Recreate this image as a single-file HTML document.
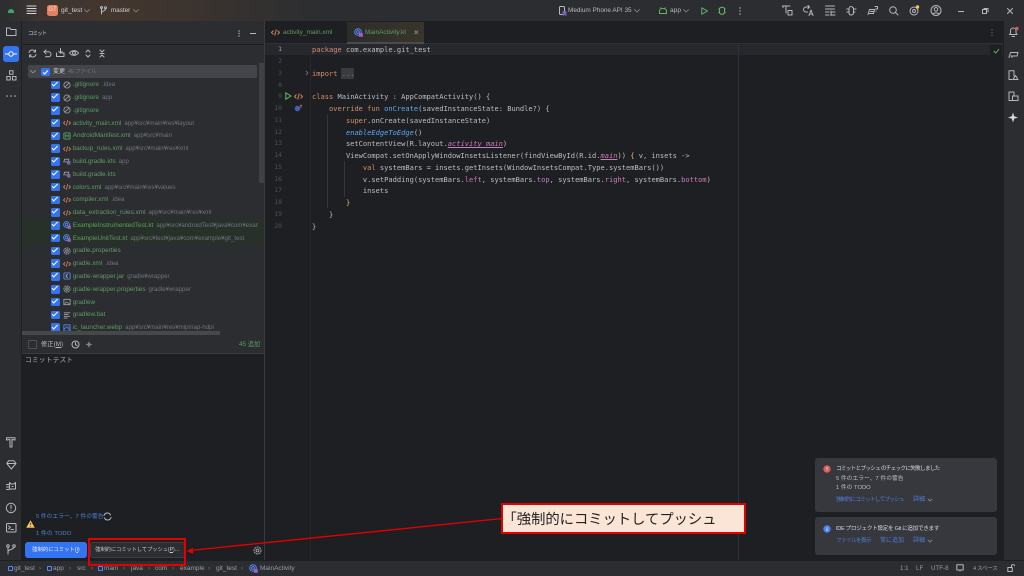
<!DOCTYPE html>
<html lang="ja"><head><meta charset="utf-8"><title>git_test</title>
<style>
html,body{margin:0;padding:0;width:1024px;height:576px;overflow:hidden;background:#1e1f22}
body{position:relative;font-family:"Liberation Sans","Noto Sans CJK JP",sans-serif;color:#bcbec4}
#m{position:absolute;left:0;top:0;width:1024px;height:576px;overflow:hidden;filter:blur(.35px)}
.a{position:absolute}
.t{position:absolute;white-space:nowrap;line-height:10px;height:10px;font-size:6.6px}
.r{position:absolute;left:51px;height:13px;width:213px;white-space:nowrap}
.r .c{position:absolute;left:0;top:2px;width:8.5px;height:8.5px;background:#3574f0;border-radius:1.5px}
.r .c:after{content:"";position:absolute;left:1.4px;top:1.2px;width:4.6px;height:2.4px;border-left:1.2px solid #fff;border-bottom:1.2px solid #fff;transform:rotate(-45deg)}
.r svg{position:absolute;left:12px;top:2.3px;width:8px;height:8px}
.r b{position:absolute;left:21.7px;top:1.9px;font-weight:400;font-size:6.4px;line-height:10px;color:#5f9b63}
.r b i{font-style:normal;color:#6f737a;margin-left:3px;font-size:6.1px}
svg{display:block;overflow:visible}
.s{fill:none;stroke:#b4b8bf;stroke-width:1;stroke-linecap:round;stroke-linejoin:round}
.h{fill:none;stroke:#8a8d93;stroke-width:.8;stroke-linecap:round;stroke-linejoin:round}
.code{position:absolute;left:312px;font:7.06px/11.75px "DejaVu Sans Mono","Liberation Mono",monospace;color:#bcbec4;white-space:pre}
.k{color:#cf8e6d}.f{color:#56a8f5}.p{color:#c77dbb}.st{color:#56a8f5;font-style:italic}
.u{text-decoration:underline;color:#c77dbb}
.n{position:absolute;left:260px;width:22px;text-align:right;font:6.4px/11.75px "DejaVu Sans Mono","Liberation Mono",monospace;color:#4b5059}
</style></head><body>
<div id="m">

<!-- title bar -->
<div class="a" style="left:0;top:0;width:1024px;height:21px;background:linear-gradient(90deg,#2b2d30 0,#3e3530 40px,#43372e 110px,#3a332f 200px,#2b2d30 330px)"></div>
<div class="a" style="left:8px;top:9px;width:6px;height:3.5px;background:#3ddc84;border-radius:3px 3px 0 0;opacity:.7"></div>
<svg class="a" style="left:27px;top:5px" width="10" height="10"><path class="s" d="M0 1H9M0 3.500H9M0 6H9M0 8.500H9" style="stroke:#d5d7da"/></svg>
<div class="a" style="left:47px;top:5px;width:11px;height:11px;background:#e0805f;border-radius:2.5px;color:#fbe3d8;font-size:6px;line-height:11px;text-align:center">GT</div>
<div class="t" style="left:61px;top:6px;color:#cfd1d4">git_test</div>
<svg class="a" style="left:84px;top:9px" width="6" height="4"><path class="h" d="M.5 .5L3 3L5.500 .5"/></svg>
<svg class="a" style="left:100px;top:6px" width="7" height="9"><path class="s" d="M1.500 2V8M5.500 3C5.500 5 1.500 5 1.500 6.500"/><circle class="s" cx="1.500" cy="1.500" r="1"/><circle class="s" cx="5.500" cy="1.800" r="1"/></svg>
<div class="t" style="left:111px;top:6px;color:#cfd1d4;font-size:6.300px">master</div>
<svg class="a" style="left:133px;top:9px" width="6" height="4"><path class="h" d="M.5 .5L3 3L5.500 .5"/></svg>

<svg class="a" style="left:559px;top:6px" width="8" height="10"><rect class="s" x=".5" y=".5" width="5" height="8" rx="1"/><rect x="3.500" y="5" width="4" height="4.500" fill="#7a5fb0"/></svg>
<div class="t" style="left:568px;top:6px;color:#b5b8bd;font-size:6.400px">Medium Phone API 35</div>
<svg class="a" style="left:634px;top:9px" width="6" height="4"><path class="h" d="M.5 .5L3 3L5.500 .5"/></svg>
<svg class="a" style="left:659px;top:7px" width="8" height="7"><path d="M.5 6.500V4C.5 2.500 2 1.500 4 1.500S7.500 2.500 7.500 4V6.500Z" fill="none" stroke="#5fb865"/><path d="M1.500 .3L2.500 1.800M6.500 .3L5.500 1.800" stroke="#5fb865" stroke-width=".8"/></svg>
<div class="t" style="left:670px;top:6px;color:#b5b8bd">app</div>
<svg class="a" style="left:683px;top:9px" width="6" height="4"><path class="h" d="M.5 .5L3 3L5.500 .5"/></svg>
<svg class="a" style="left:701px;top:7px" width="7" height="8"><path d="M.8 .8L6.500 4L.8 7.200Z" fill="none" stroke="#5fb865" stroke-linejoin="round"/></svg>
<svg class="a" style="left:718px;top:6px" width="8" height="9"><path d="M1.500 3.500C1.500 2 2.500 1.300 4 1.300S6.500 2 6.500 3.500V6C6.500 7.500 5.500 8.300 4 8.300S1.500 7.500 1.500 6Z" fill="none" stroke="#5fb865"/><path d="M0 3H1.500M0 6.500H1.500M6.500 3H8M6.500 6.500H8" stroke="#5fb865" stroke-width=".8"/></svg>
<svg class="a" style="left:739px;top:7px" width="2" height="8"><circle cx="1" cy="1" r=".7" fill="#b4b8bf"/><circle cx="1" cy="4" r=".7" fill="#b4b8bf"/><circle cx="1" cy="7" r=".7" fill="#b4b8bf"/></svg>

<svg class="a" style="left:782px;top:5px" width="11" height="11"><path class="s" d="M.5 1H8M4 1V8M1 1V2.500M6 5.500H10V10H6Z"/></svg>
<svg class="a" style="left:803px;top:5px" width="11" height="11"><path class="s" d="M6 2H3A2.500 2.500 0 0 0 3 7H4.500M5 .5L6.500 2L5 3.500M6 10.500L8 5L10 10.500M6.800 9H9.200"/></svg>
<svg class="a" style="left:825px;top:5px" width="11" height="11"><path class="s" d="M.5 1H9.500M.5 4H9.500M.5 7H4M.5 10H4M6 7H10M6 10H10M6 6V10.500"/></svg>
<svg class="a" style="left:846px;top:5px" width="11" height="11"><path class="s" d="M3 4C3 2.500 4 1.500 5 1.500S7.500 2.500 7.500 4V7.500C7.500 9 6.500 10 5 10S3 9 3 7.500ZM.8 4H3M.8 7H3M7.500 4H10M7.500 7H9"/></svg>
<svg class="a" style="left:867px;top:5px" width="11" height="11"><path class="s" d="M1 9.500L2.500 4.500H7.500L6.500 8.500H2.500M3.500 6.500H6M8 1.500H10.500V4H8.500M9 6V6.300"/></svg>
<svg class="a" style="left:889px;top:6px" width="10" height="10"><circle class="s" cx="4" cy="4" r="3.300"/><path class="s" d="M6.500 6.500L9 9"/></svg>
<svg class="a" style="left:909px;top:5px" width="12" height="11"><circle class="s" cx="5" cy="6" r="1.500"/><circle class="s" cx="5" cy="6" r="4"/><circle cx="8.500" cy="2" r="1.700" fill="#f2c55c"/></svg>
<svg class="a" style="left:930px;top:5px" width="12" height="12"><circle class="s" cx="6" cy="5.500" r="5"/><circle class="s" cx="6" cy="4.300" r="1.800"/><path class="s" d="M3 9C3.500 7.500 8.500 7.500 9 9"/></svg>
<div class="a" style="left:958px;top:10.500px;width:6px;height:1px;background:#b4b8bf"></div>
<svg class="a" style="left:982px;top:8px" width="7" height="6"><rect class="s" x=".5" y="1.500" width="4" height="4"/><path class="s" d="M2 .5H6V4"/></svg>
<svg class="a" style="left:1007px;top:8px" width="6" height="6"><path class="s" d="M.5 .5L5.500 5.500M5.500 .5L.5 5.500"/></svg>

<!-- left stripe -->
<div class="a" style="left:0;top:21px;width:22px;height:539px;background:#2b2d30;border-right:1px solid #1e1f22;box-sizing:border-box"></div>
<svg class="a" style="left:6px;top:27px" width="11" height="10"><path class="s" d="M.5 8.500V1H4L5 2.500H10V8.500Z"/></svg>
<div class="a" style="left:3px;top:46px;width:16px;height:16px;background:#3574f0;border-radius:3px"></div>
<svg class="a" style="left:5px;top:50px" width="12" height="8"><path d="M0 4H3.500M8.500 4H12" stroke="#fff" stroke-width="1"/><circle cx="6" cy="4" r="2.200" fill="none" stroke="#fff"/></svg>
<svg class="a" style="left:6px;top:70px" width="11" height="11"><rect class="s" x="3.500" y=".8" width="3.500" height="3.500"/><rect class="s" x=".8" y="6.500" width="3.500" height="3.500"/><rect class="s" x="6.500" y="6.500" width="3.500" height="3.500"/></svg>
<svg class="a" style="left:6px;top:95px" width="10" height="2"><circle cx="1" cy="1" r=".8" fill="#b4b8bf"/><circle cx="5" cy="1" r=".8" fill="#b4b8bf"/><circle cx="9" cy="1" r=".8" fill="#b4b8bf"/></svg>
<svg class="a" style="left:6px;top:437px" width="10" height="11"><path class="s" d="M.5 .8H9V3L6 2.500V10H4V2.500L.5 3Z"/></svg>
<svg class="a" style="left:6px;top:460px" width="11" height="10"><path class="s" d="M2.500 .8H8L10 3.500L5.300 9L.8 3.500ZM.8 3.500H10"/></svg>
<svg class="a" style="left:6px;top:481px" width="11" height="11"><path class="s" d="M3.500 1.500L5 3H8L9.500 1.500V8H3.500ZM.5 3.500H3M.5 6H3M.5 8.500H3M7 5.500H6"/></svg>
<svg class="a" style="left:5px;top:502px" width="12" height="12"><circle class="s" cx="6" cy="6" r="4.700"/><path class="s" d="M6 3.300V6.500M6 8.500V8.700"/></svg>
<svg class="a" style="left:6px;top:523px" width="11" height="10"><rect class="s" x=".5" y=".5" width="9.500" height="8.500" rx="1"/><path class="s" d="M2.500 3L4.500 4.500L2.500 6M5 6.500H7.500"/></svg>
<svg class="a" style="left:6px;top:544px" width="11" height="11"><circle class="s" cx="2" cy="2" r="1.300"/><circle class="s" cx="8" cy="2" r="1.300"/><path class="s" d="M2 3.300V10M8 3.300C8 5.500 2 5.500 2 7.500"/></svg>

<!-- commit panel -->
<div class="a" style="left:22px;top:21px;width:242px;height:332px;background:#2b2d30"></div>
<div class="a" style="left:264px;top:21px;width:1px;height:539px;background:#393b40"></div>
<div class="a" style="left:22px;top:44px;width:242px;height:1px;background:#1e1f22"></div>
<div class="t" style="left:28px;top:28.500px;font-size:5.400px;letter-spacing:-.8px;color:#c9cbcf">コミット</div>
<svg class="a" style="left:238px;top:30px" width="2" height="7"><circle cx="1" cy="1" r=".7" fill="#b4b8bf"/><circle cx="1" cy="3.500" r=".7" fill="#b4b8bf"/><circle cx="1" cy="6" r=".7" fill="#b4b8bf"/></svg>
<div class="a" style="left:250px;top:33px;width:6px;height:1px;background:#b4b8bf"></div>

<svg class="a" style="left:28px;top:49px" width="9" height="9"><path class="s" d="M1 3.500A3.500 3.500 0 0 1 7.500 3M8 5.500A3.500 3.500 0 0 1 1.500 6M7.500 1V3H5.800M1.500 8V6H3.200"/></svg>
<svg class="a" style="left:43px;top:49px" width="9" height="9"><path class="s" d="M3 .8L1 2.800L3 4.800M1 2.800H5.500A2.500 2.500 0 0 1 5.500 7.800H2.500"/></svg>
<svg class="a" style="left:56px;top:48px" width="9" height="10"><path class="s" d="M4.500 .5V5M2.800 3.500L4.500 5.200L6.200 3.500M.5 5V8.500H8V5H6"/></svg>
<svg class="a" style="left:69px;top:49px" width="11" height="9"><path class="s" d="M.5 4C3 .8 7 .8 9.500 4C7 7.200 3 7.200 .5 4Z"/><circle class="s" cx="5" cy="4" r="1.500"/></svg>
<svg class="a" style="left:85px;top:49px" width="6" height="9"><path class="s" d="M1 3L3 1L5 3M1 6L3 8L5 6"/></svg>
<svg class="a" style="left:99px;top:49px" width="6" height="9"><path class="s" d="M1 1L3 3L5 1M1 8L3 6L5 8M1 4.500H5"/></svg>

<!-- changes row -->
<div class="a" style="left:28px;top:65px;width:229px;height:12.700px;background:#43454a;border-radius:2px"></div>
<svg class="a" style="left:30px;top:70px" width="6" height="4"><path class="s" d="M.5 .5L3 3L5.500 .5" style="stroke:#868a91"/></svg>
<div class="a" style="left:41px;top:67.500px;width:8.500px;height:8.500px;background:#3574f0;border-radius:1.500px"></div>
<svg class="a" style="left:41px;top:67.500px" width="9" height="9"><path d="M2 4.400L3.700 6L6.800 2.500" fill="none" stroke="#fff" stroke-width="1.200"/></svg>
<div class="t" style="left:53px;top:67px;font-size:6px;color:#c9cbcf">変更</div>
<div class="t" style="left:68px;top:67px;font-size:5.800px;letter-spacing:-.4px;color:#6f737a">45 ファイル</div>

<!-- green rows -->
<div class="a" style="left:22px;top:219px;width:242px;height:25.500px;background:#283129"></div>

<svg width="0" height="0" style="position:absolute">
<symbol id="ig" viewBox="0 0 9 9"><circle cx="4.500" cy="4.500" r="3.500" fill="none" stroke="#9a9da3"/><path d="M2 7L7 2" stroke="#9a9da3"/></symbol>
<symbol id="xml" viewBox="0 0 9 9"><path d="M2.500 2.500L.5 4.500L2.500 6.500M6.500 2.500L8.500 4.500L6.500 6.500" fill="none" stroke="#c9825f"/><path d="M5.200 1.500L3.800 7.500" stroke="#c9825f"/></symbol>
<symbol id="man" viewBox="0 0 9 9"><rect x="1" y="1" width="7" height="7" rx="1" fill="none" stroke="#57a860"/><path d="M2.800 6.200V3L4.500 5L6.200 3V6.200" fill="none" stroke="#57a860" stroke-width=".8"/></symbol>
<symbol id="gr" viewBox="0 0 9 9"><path d="M.8 6L1.800 2.500H6.500L6 5.500H2" fill="none" stroke="#a0a4aa"/><rect x="4.500" y="4.500" width="4" height="4" fill="#7a5fb0"/></symbol>
<symbol id="kt" viewBox="0 0 9 9"><circle cx="4" cy="4" r="3.300" fill="none" stroke="#548af7"/><circle cx="4" cy="4" r="1.400" fill="none" stroke="#548af7"/><rect x="5" y="5" width="3.800" height="3.800" fill="#9b5fc7"/></symbol>
<symbol id="gear" viewBox="0 0 9 9"><circle cx="4.500" cy="4.500" r="3.500" fill="none" stroke="#a0a4aa" stroke-dasharray="2 .6"/><circle cx="4.500" cy="4.500" r="1.400" fill="none" stroke="#a0a4aa"/></symbol>
<symbol id="jar" viewBox="0 0 9 9"><rect x="1" y="1" width="7" height="7" rx="1" fill="none" stroke="#548af7"/><path d="M3.500 2.500V6.500M5.500 2.500L3.700 4.500L5.500 6.500" fill="none" stroke="#a0a4aa" stroke-width=".8"/></symbol>
<symbol id="img" viewBox="0 0 9 9"><rect x="1" y="1.500" width="7" height="6" fill="none" stroke="#a0a4aa"/><path d="M2 6.500L4 4.500L7 6.500" fill="none" stroke="#a0a4aa" stroke-width=".8"/></symbol>
<symbol id="txt" viewBox="0 0 9 9"><path d="M1 2H8M1 4H6M1 6H8M1 8H5" stroke="#a0a4aa"/></symbol>
<symbol id="webp" viewBox="0 0 9 9"><rect x="1" y="1" width="7" height="7" fill="none" stroke="#548af7"/><path d="M1 6L4 3.500L8 7M5 2.500L7 4" fill="none" stroke="#548af7" stroke-width=".8"/></symbol>
</svg>

<div class="a" style="left:22px;top:78px;width:236px;height:253px;overflow:hidden">
<div class="a" style="left:-22px;top:-78px;width:280px;height:420px">
<div class="r" style="top:78.500px"><span class="c"></span><svg><use href="#ig"/></svg><b>.gitignore<i>.idea</i></b></div>
<div class="r" style="top:91.300px"><span class="c"></span><svg><use href="#ig"/></svg><b>.gitignore<i>app</i></b></div>
<div class="r" style="top:104px"><span class="c"></span><svg><use href="#ig"/></svg><b>.gitignore</b></div>
<div class="r" style="top:116.800px"><span class="c"></span><svg><use href="#xml"/></svg><b>activity_main.xml<i>app¥src¥main¥res¥layout</i></b></div>
<div class="r" style="top:129.600px"><span class="c"></span><svg><use href="#man"/></svg><b>AndroidManifest.xml<i>app¥src¥main</i></b></div>
<div class="r" style="top:142.400px"><span class="c"></span><svg><use href="#xml"/></svg><b>backup_rules.xml<i>app¥src¥main¥res¥xml</i></b></div>
<div class="r" style="top:155.200px"><span class="c"></span><svg><use href="#gr"/></svg><b>build.gradle.kts<i>app</i></b></div>
<div class="r" style="top:168px"><span class="c"></span><svg><use href="#gr"/></svg><b>build.gradle.kts</b></div>
<div class="r" style="top:180.800px"><span class="c"></span><svg><use href="#xml"/></svg><b>colors.xml<i>app¥src¥main¥res¥values</i></b></div>
<div class="r" style="top:193.600px"><span class="c"></span><svg><use href="#xml"/></svg><b>compiler.xml<i>.idea</i></b></div>
<div class="r" style="top:206.300px"><span class="c"></span><svg><use href="#xml"/></svg><b>data_extraction_rules.xml<i>app¥src¥main¥res¥xml</i></b></div>
<div class="r" style="top:219px"><span class="c"></span><svg><use href="#kt"/></svg><b>ExampleInstrumentedTest.kt<i>app¥src¥androidTest¥java¥com¥example</i></b></div>
<div class="r" style="top:231.800px"><span class="c"></span><svg><use href="#kt"/></svg><b>ExampleUnitTest.kt<i>app¥src¥test¥java¥com¥example¥git_test</i></b></div>
<div class="r" style="top:244.600px"><span class="c"></span><svg><use href="#gear"/></svg><b>gradle.properties</b></div>
<div class="r" style="top:257.400px"><span class="c"></span><svg><use href="#xml"/></svg><b>gradle.xml<i>.idea</i></b></div>
<div class="r" style="top:270.200px"><span class="c"></span><svg><use href="#jar"/></svg><b>gradle-wrapper.jar<i>gradle¥wrapper</i></b></div>
<div class="r" style="top:283px"><span class="c"></span><svg><use href="#gear"/></svg><b>gradle-wrapper.properties<i>gradle¥wrapper</i></b></div>
<div class="r" style="top:295.800px"><span class="c"></span><svg><use href="#img"/></svg><b>gradlew</b></div>
<div class="r" style="top:308.600px"><span class="c"></span><svg><use href="#txt"/></svg><b>gradlew.bat</b></div>
<div class="r" style="top:321.400px"><span class="c"></span><svg><use href="#webp"/></svg><b>ic_launcher.webp<i>app¥src¥main¥res¥mipmap-hdpi</i></b></div>
</div></div>
<!-- scrollbars -->
<div class="a" style="left:259px;top:63px;width:5px;height:120px;background:#3f4145"></div>
<div class="a" style="left:22px;top:331px;width:198px;height:4px;background:#46484c"></div>

<!-- amend -->
<div class="a" style="left:28px;top:340px;width:8.500px;height:8.500px;box-sizing:border-box;border:1px solid #4e5157;border-radius:1.500px"></div>
<div class="t" style="left:41px;top:340px;font-size:6.300px;color:#b5b8bd">修正(<u>M</u>)</div>
<svg class="a" style="left:71px;top:340px" width="9" height="9"><circle class="s" cx="4.500" cy="4.500" r="3.500"/><path class="s" d="M4.500 2.500V4.700L6 5.500"/></svg>
<svg class="a" style="left:85px;top:340px" width="8" height="9"><path d="M4 1L5 3.500L7.500 4.500L5 5.500L4 8L3 5.500L.5 4.500L3 3.500Z" fill="#7d8087"/></svg>
<div class="t" style="left:239px;top:340px;font-size:6.300px;color:#5f9b63">45 追加</div>
<div class="a" style="left:22px;top:353px;width:242px;height:1px;background:#393b40"></div>
<div class="t" style="left:25px;top:355.500px;font-size:6.800px;color:#a9abb0;letter-spacing:.1px">コミットテスト</div>

<!-- checks -->
<div class="t" style="left:36px;top:512px;font-size:5.800px;color:#4f7fd6">5 件のエラー、7 件の警告</div>
<svg class="a" style="left:103px;top:512px" width="9" height="9"><path class="s" d="M1 3.500A3.500 3.500 0 0 1 7.500 3M8 5.500A3.500 3.500 0 0 1 1.500 6"/></svg>
<svg class="a" style="left:25.500px;top:519.500px" width="9" height="8"><path d="M4.500 .3L8.800 7.700H.2Z" fill="#f2c55c"/><path d="M4.500 2.700V5M4.500 6V6.700" stroke="#3a2f10" stroke-width=".8"/></svg>
<div class="t" style="left:36px;top:529px;font-size:5.900px;color:#4f7fd6">1 件の TODO</div>
<div class="a" style="left:25px;top:542px;width:62px;height:16px;background:#3574f0;border-radius:3px;color:#e8eefc;font-size:5.300px;line-height:16px;text-align:center;white-space:nowrap">強制的にコミット(<u>I</u>)</div>
<div class="a" style="left:90px;top:542px;width:94.500px;height:16px;box-sizing:border-box;background:#2b2d30;border:1px solid #3c3f43;border-radius:3px;color:#c9cbcf;font-size:5.200px;line-height:14px;text-align:center;white-space:nowrap">強制的にコミットしてプッシュ(<u>P</u>)...</div>
<svg class="a" style="left:253px;top:546px" width="9" height="9"><use href="#gear"/></svg>

<!-- editor tabs -->
<div class="a" style="left:265px;top:43px;width:738px;height:1px;background:#2f3136"></div>
<div class="a" style="left:347px;top:22px;width:77px;height:20px;background:linear-gradient(90deg,#2c2c2b,#38352a)"></div>
<div class="a" style="left:347px;top:42px;width:77px;height:2px;background:#4a4b4c"></div>
<svg class="a" style="left:271px;top:28px" width="9" height="9"><use href="#xml"/></svg>
<div class="t" style="left:283px;top:28px;color:#5f9b63;font-size:6.500px">activity_main.xml</div>
<svg class="a" style="left:354px;top:28px" width="9" height="9"><use href="#kt"/></svg>
<div class="t" style="left:365px;top:28px;color:#5f9b63;font-size:6.500px">MainActivity.kt</div>
<svg class="a" style="left:414px;top:30px" width="5" height="5"><path d="M.5 .5L4 4M4 .5L.5 4" stroke="#7d8087"/></svg>
<svg class="a" style="left:991px;top:29px" width="2" height="7"><circle cx="1" cy="1" r=".6" fill="#6f737a"/><circle cx="1" cy="3.500" r=".6" fill="#6f737a"/><circle cx="1" cy="6" r=".6" fill="#6f737a"/></svg>

<!-- editor -->
<div class="a" style="left:265px;top:44px;width:738px;height:11px;background:#26282e"></div>
<div class="a" style="left:310px;top:44px;width:1px;height:516px;background:#26282c"></div>
<div class="a" style="left:738px;top:44px;width:1px;height:516px;background:#2f3136"></div>
<div class="a" style="left:990px;top:45px;width:12px;height:11px;background:#1e1f22"></div>
<svg class="a" style="left:993px;top:48px" width="7" height="6"><path d="M.8 3L2.800 5L6 1" fill="none" stroke="#5fb865"/></svg>

<svg class="a" style="left:305px;top:70px" width="4" height="6"><path d="M.8 .8L3 3L.8 5.200" fill="none" stroke="#6f737a" stroke-width=".8"/></svg>
<svg class="a" style="left:285px;top:92px" width="7" height="8"><path d="M.8 .8L6 4L.8 7.200Z" fill="none" stroke="#5fb865"/></svg>
<svg class="a" style="left:294px;top:92px" width="9" height="9"><use href="#xml"/></svg>
<svg class="a" style="left:294px;top:104px" width="9" height="8"><circle cx="3.500" cy="4.500" r="2.800" fill="#3f62b5"/><path d="M7 4V1M6 2L7 1L8 2" stroke="#e06060" stroke-width=".7" fill="none"/></svg>
<div class="a" style="left:327px;top:114px;width:1px;height:94px;background:#313438"></div>
<div class="a" style="left:344px;top:161px;width:1px;height:36px;background:#313438"></div>
<div class="a" style="left:341px;top:68px;width:13px;height:11px;background:#393b40"></div>

<div class="a" style="left:0;top:.8px;width:1024px;height:300px">
<div class="n" style="top:43.500px;color:#a1a3ab">1</div>
<div class="n" style="top:55.300px">2</div>
<div class="n" style="top:67px">3</div>
<div class="n" style="top:78.800px">8</div>
<div class="n" style="top:90.500px">9</div>
<div class="n" style="top:102.300px">10</div>
<div class="n" style="top:114px">11</div>
<div class="n" style="top:125.800px">12</div>
<div class="n" style="top:137.500px">13</div>
<div class="n" style="top:149.300px">14</div>
<div class="n" style="top:161px">15</div>
<div class="n" style="top:172.800px">16</div>
<div class="n" style="top:184.500px">17</div>
<div class="n" style="top:196.300px">18</div>
<div class="n" style="top:208px">19</div>
<div class="n" style="top:219.800px">20</div>
<div class="code" style="top:43.500px"><span class="k">package</span> com.example.git_test</div>
<div class="code" style="top:67px"><span class="k">import</span> <span style="color:#7d8087">...</span></div>
<div class="code" style="top:90.500px"><span class="k">class</span> MainActivity : AppCompatActivity() {</div>
<div class="code" style="top:102.300px">    <span class="k">override fun</span> <span class="f">onCreate</span>(savedInstanceState: Bundle?) {</div>
<div class="code" style="top:114px">        <span class="k">super</span>.onCreate(savedInstanceState)</div>
<div class="code" style="top:125.800px">        <span class="st">enableEdgeToEdge</span>()</div>
<div class="code" style="top:137.500px">        setContentView(R.layout.<span class="u" style="font-style:italic">activity_main</span>)</div>
<div class="code" style="top:149.300px">        ViewCompat.setOnApplyWindowInsetsListener(findViewById(R.id.<span class="u" style="font-style:italic">main</span>)) <b style="font-weight:400;color:#e0bb65">{</b> v, insets -&gt;</div>
<div class="code" style="top:161px">            <span class="k">val</span> systemBars = insets.getInsets(WindowInsetsCompat.Type.systemBars())</div>
<div class="code" style="top:172.800px">            v.setPadding(systemBars.<span class="p">left</span>, systemBars.<span class="p">top</span>, systemBars.<span class="p">right</span>, systemBars.<span class="p">bottom</span>)</div>
<div class="code" style="top:184.500px">            insets</div>
<div class="code" style="top:196.300px">        <b style="font-weight:400;color:#e0bb65">}</b></div>
<div class="code" style="top:208px">    }</div>
<div class="code" style="top:219.800px">}</div>
</div>

<!-- right stripe -->
<div class="a" style="left:1003px;top:21px;width:21px;height:539px;background:#2b2d30;border-left:1px solid #1e1f22;box-sizing:border-box"></div>
<svg class="a" style="left:1008px;top:26px" width="11" height="12"><path class="s" d="M1.500 8.500H9L8 7V4.500C8 3 6.800 2 5.200 2S2.500 3 2.500 4.500V7ZM4 10.500H6.500"/><circle cx="9" cy="2.500" r="1.700" fill="#e05555"/></svg>
<svg class="a" style="left:1008px;top:49px" width="11" height="10"><path class="s" d="M1 8.500L2.500 3.500H10L9 7H3M4 8.500V7"/></svg>
<svg class="a" style="left:1008px;top:70px" width="11" height="11"><path class="s" d="M1 .8H6V6M1 .8V9.500H4M5 9.500H10L7.500 5.500Z"/></svg>
<svg class="a" style="left:1008px;top:91px" width="11" height="11"><path class="s" d="M1 1H6V4M1 1V9.500H4"/><rect x="4.500" y="5" width="5.500" height="4.500" fill="none" stroke="#b4b8bf"/></svg>
<svg class="a" style="left:1008px;top:112px" width="10" height="11"><path d="M5 .5L6.200 4.300L10 5.500L6.200 6.700L5 10.500L3.800 6.700L0 5.500L3.800 4.300Z" fill="#d5d7da"/></svg>

<!-- notifications -->
<div class="a" style="left:815px;top:458px;width:182px;height:53.500px;background:#36383d;border-radius:3px"></div>
<svg class="a" style="left:823px;top:465px" width="8" height="8"><circle cx="4" cy="4" r="3.700" fill="#db5c5c"/><path d="M4 2V4.500M4 5.500V6" stroke="#fff" stroke-width=".8"/></svg>
<div class="t" style="left:836px;top:464px;color:#d5d7da;font-size:5.600px;letter-spacing:-.7px">コミットとプッシュ のチェックに失敗しました</div>
<div class="t" style="left:836px;top:474px;color:#bcbec4;font-size:5.800px">5 件のエラー、7 件の警告</div>
<div class="t" style="left:836px;top:483px;color:#bcbec4;font-size:5.800px">1 件の TODO</div>
<div class="t" style="left:836px;top:495px;font-size:5.600px;letter-spacing:-.74px;color:#4f7fd6">強制的にコミットしてプッシュ</div>
<div class="t" style="left:913px;top:495px;font-size:6px;color:#4f7fd6">詳細</div>
<svg class="a" style="left:927px;top:498px" width="6" height="4"><path d="M.8 .8L3 3L5.200 .8" fill="none" stroke="#8a8d93" stroke-width=".8"/></svg>

<div class="a" style="left:815px;top:517px;width:182px;height:38px;background:#36383d;border-radius:3px"></div>
<svg class="a" style="left:823px;top:525px" width="8" height="8"><circle cx="4" cy="4" r="3.700" fill="#4b82f0"/><path d="M4 3.300V6M4 2V2.500" stroke="#fff" stroke-width=".8"/></svg>
<div class="t" style="left:836px;top:524px;color:#d5d7da;font-size:5.600px;letter-spacing:-.3px">IDE プロジェクト設定を Git に追加できます</div>
<div class="t" style="left:836px;top:536px;font-size:5.600px;letter-spacing:-.6px;color:#4f7fd6">ファイルを表示</div>
<div class="t" style="left:880px;top:536px;font-size:6px;color:#4f7fd6">常に追加</div>
<div class="t" style="left:913px;top:536px;font-size:6px;color:#4f7fd6">詳細</div>
<svg class="a" style="left:927px;top:539px" width="6" height="4"><path d="M.8 .8L3 3L5.200 .8" fill="none" stroke="#8a8d93" stroke-width=".8"/></svg>

<!-- status bar -->
<div class="a" style="left:0;top:560px;width:1024px;height:16px;background:#2b2d30;border-top:1px solid #1e1f22;box-sizing:border-box"></div>
<div class="a" style="left:8px;top:566px;width:3px;height:3px;border:1px solid #548af7;border-radius:1px"></div>
<div class="t" style="left:14px;top:564px;font-size:6.500px;color:#9a9da3">git_test</div>
<div class="a" style="left:47px;top:566px;width:3px;height:3px;border:1px solid #548af7;border-radius:1px"></div>
<div class="t" style="left:53px;top:564px;font-size:6.500px;color:#9a9da3">app</div>
<div class="t" style="left:77px;top:564px;font-size:6.500px;color:#9a9da3">src</div>
<div class="a" style="left:98px;top:566px;width:3px;height:3px;border:1px solid #548af7;border-radius:1px"></div>
<div class="t" style="left:104px;top:564px;font-size:6.500px;color:#9a9da3">main</div>
<div class="t" style="left:131px;top:564px;font-size:6.500px;color:#9a9da3">java</div>
<div class="t" style="left:155px;top:564px;font-size:6.500px;color:#9a9da3">com</div>
<div class="t" style="left:180px;top:564px;font-size:6.500px;color:#9a9da3">example</div>
<div class="t" style="left:216px;top:564px;font-size:6.500px;color:#9a9da3">git_test</div>
<div class="t" style="left:39px;top:564px;font-size:6px;color:#7d8087">›</div>
<div class="t" style="left:69px;top:564px;font-size:6px;color:#7d8087">›</div>
<div class="t" style="left:91px;top:564px;font-size:6px;color:#7d8087">›</div>
<div class="t" style="left:123px;top:564px;font-size:6px;color:#7d8087">›</div>
<div class="t" style="left:148px;top:564px;font-size:6px;color:#7d8087">›</div>
<div class="t" style="left:172px;top:564px;font-size:6px;color:#7d8087">›</div>
<div class="t" style="left:208px;top:564px;font-size:6px;color:#7d8087">›</div>
<div class="t" style="left:241px;top:564px;font-size:6px;color:#7d8087">›</div>
<svg class="a" style="left:249px;top:564px" width="9" height="9"><use href="#kt"/></svg>
<div class="t" style="left:260px;top:564px;font-size:6.500px;color:#9a9da3">MainActivity</div>
<div class="t" style="left:900px;top:564px;font-size:6.200px;color:#9a9da3">1:1</div>
<div class="t" style="left:916px;top:564px;font-size:6.200px;color:#9a9da3">LF</div>
<div class="t" style="left:931px;top:564px;font-size:6.200px;color:#9a9da3">UTF-8</div>
<svg class="a" style="left:956px;top:564px" width="8" height="8"><path class="s" d="M.8 .8H7.200V6H4.500L4 7L3.500 6H.8Z"/></svg>
<div class="t" style="left:973px;top:564px;font-size:5.600px;letter-spacing:-.3px;color:#9a9da3">4 スペース</div>
<svg class="a" style="left:1007px;top:564px" width="9" height="8"><rect class="s" x=".8" y="3.500" width="4.500" height="4"/><path class="s" d="M4.500 3.500V1.800C4.500 .2 7.500 .2 7.500 1.800"/></svg>

</div>

<!-- annotations -->
<div class="a" style="left:88px;top:538px;width:98px;height:27.500px;box-sizing:border-box;border:2px solid #e50000"></div>
<svg class="a" style="left:0;top:0" width="1024" height="576"><path d="M190 550.500L502 518.500" stroke="#e50000" stroke-width="1.300" fill="none"/><path d="M186.500 551L193 547.800V553.800Z" fill="#e50000"/></svg>
<div class="a" style="left:501px;top:503px;width:245px;height:30.500px;box-sizing:border-box;border:2px solid #e50000;background:#fbe5d6"></div>
<div class="a" style="left:502.500px;top:509.500px;font-size:14.300px;line-height:17px;color:#222;white-space:nowrap;font-family:'Noto Sans CJK JP','Liberation Sans',sans-serif">「強制的にコミットしてプッシュ</div>

</body></html>
